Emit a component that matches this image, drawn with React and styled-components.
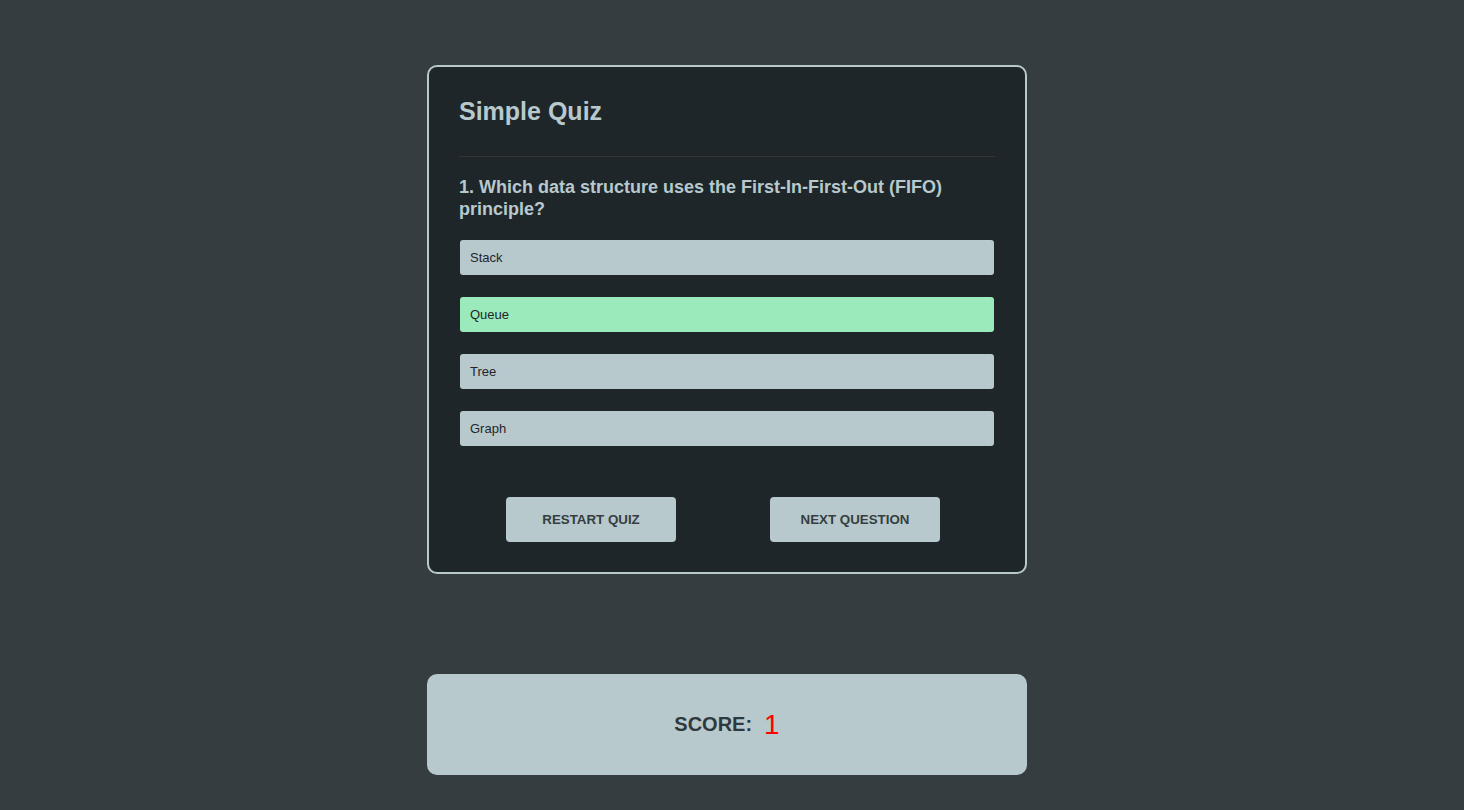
import React, { useState } from "react";
import styled, { createGlobalStyle } from "styled-components";

const GlobalStyle = createGlobalStyle`
  html, body {
    margin: 0;
    padding: 0;
    background-color: #353d41;
    font-family: "Liberation Sans", Arial, sans-serif;
  }
`;

const questions = [
  {
    question: "Which data structure uses the First-In-First-Out (FIFO) principle?",
    options: ["Stack", "Queue", "Tree", "Graph"],
    answer: 1,
  },
];

export default function App() {
  const [current] = useState(0);
  const [selected, setSelected] = useState(1);
  const [score] = useState(1);

  const q = questions[current];

  return (
    <>
      <GlobalStyle />
      <Page>
        <Card>
          <Title>Simple Quiz</Title>
          <Divider />
          <Question>{`${current + 1}. ${q.question}`}</Question>
          <Options>
            {q.options.map((opt, i) => (
              <Option
                key={opt}
                $correct={selected === i}
                onClick={() => setSelected(i)}
              >
                {opt}
              </Option>
            ))}
          </Options>
          <Buttons>
            <Button>Restart Quiz</Button>
            <Button>Next Question</Button>
          </Buttons>
        </Card>

        <ScoreBox>
          <ScoreLabel>Score:</ScoreLabel>
          <ScoreValue>{score}</ScoreValue>
        </ScoreBox>
      </Page>
    </>
  );
}

// Styling

const Page = styled.main`
  display: flex;
  flex-direction: column;
  align-items: center;
  gap: 100px;
  padding: 65px 10px 35px 0;
`;

const Card = styled.section`
  box-sizing: border-box;
  width: 600px;
  padding: 30px;
  background-color: #1f2629;
  border: 2px solid #b7c9cd;
  border-radius: 10px;
`;

const Title = styled.h2`
  margin: 0;
  font-size: 25px;
  line-height: 29px;
  font-weight: bold;
  color: #b7c9cd;
`;

const Divider = styled.hr`
  margin: 30px 0 19px;
  border: none;
  height: 1px;
  background-color: #373637;
`;

const Question = styled.h3`
  margin: 0;
  font-size: 18px;
  line-height: 22px;
  font-weight: bold;
  color: #b7c9cd;
`;

const Options = styled.ul`
  list-style: none;
  margin: 20px 1px 0;
  padding: 0;
  display: flex;
  flex-direction: column;
  gap: 22px;
`;

const Option = styled.li`
  height: 35px;
  display: flex;
  align-items: center;
  padding-left: 10px;
  font-size: 13px;
  color: #1f2629;
  background-color: ${(p) => (p.$correct ? "#9aeabc" : "#b7c9cd")};
  border-radius: 3px;
  cursor: pointer;
`;

const Buttons = styled.div`
  display: flex;
  justify-content: space-around;
  margin-top: 51px;
  padding-right: 8px;
`;

const Button = styled.button`
  width: 170px;
  height: 45px;
  border: none;
  border-radius: 4px;
  background-color: #b7c9cd;
  color: #353d41;
  font-family: "Liberation Sans", Arial, sans-serif;
  font-size: 13.33px;
  font-weight: bold;
  text-transform: uppercase;
  cursor: pointer;
`;

const ScoreBox = styled.section`
  box-sizing: border-box;
  width: 600px;
  height: 101px;
  display: flex;
  align-items: center;
  justify-content: center;
  gap: 12px;
  background-color: #b7c9cd;
  border-radius: 10px;
`;

const ScoreLabel = styled.span`
  font-size: 20px;
  font-weight: bold;
  text-transform: uppercase;
  color: #2f393d;
`;

const ScoreValue = styled.span`
  font-size: 28px;
  color: #ff0000;
`;
